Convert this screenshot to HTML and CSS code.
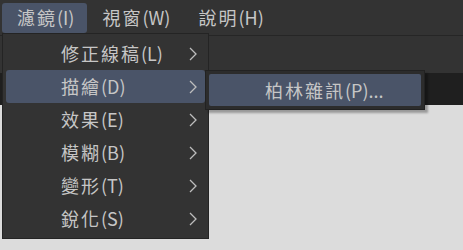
FILE: index.html
```html
<!DOCTYPE html>
<html lang="zh-Hant">
<head>
<meta charset="utf-8">
<link rel="stylesheet" href="styles.css">
</head>
<body>
<div class="app">
  <div class="menubar">
    <div class="mb-item active"><span class="cj">濾鏡</span>(I)</div>
    <div class="mb-item"><span class="cj">視窗</span>(W)</div>
    <div class="mb-item"><span class="cj">說明</span>(H)</div>
  </div>
  <div class="toolbar"></div>
  <div class="tabbar"></div>
  <div class="canvas"></div>

  <div class="dropdown">
    <div class="dd-item"><span class="label"><span class="cj">修正線稿</span>(L)</span><svg class="chev" viewBox="0 0 8 14"><path d="M1 1 L7 7 L1 13" /></svg></div>
    <div class="dd-item hl"><span class="label"><span class="cj">描繪</span>(D)</span><svg class="chev" viewBox="0 0 8 14"><path d="M1 1 L7 7 L1 13" /></svg></div>
    <div class="dd-item"><span class="label"><span class="cj">效果</span>(E)</span><svg class="chev" viewBox="0 0 8 14"><path d="M1 1 L7 7 L1 13" /></svg></div>
    <div class="dd-item"><span class="label"><span class="cj">模糊</span>(B)</span><svg class="chev" viewBox="0 0 8 14"><path d="M1 1 L7 7 L1 13" /></svg></div>
    <div class="dd-item"><span class="label"><span class="cj">變形</span>(T)</span><svg class="chev" viewBox="0 0 8 14"><path d="M1 1 L7 7 L1 13" /></svg></div>
    <div class="dd-item"><span class="label"><span class="cj">銳化</span>(S)</span><svg class="chev" viewBox="0 0 8 14"><path d="M1 1 L7 7 L1 13" /></svg></div>
  </div>

  <div class="submenu">
    <div class="sub-item"><span class="cj">柏林雜訊</span>(P)...</div>
  </div>
</div>
</body>
</html>
```
FILE: styles.css
```css
html, body {
  margin: 0;
  padding: 0;
  background: #dcdcdc;
  width: 463px;
  height: 250px;
  overflow: hidden;
  font-family: "Noto Sans CJK TC", "Noto Sans", sans-serif;
}
.app {
  position: relative;
  width: 463px;
  height: 250px;
  display: flex;
  flex-direction: column;
}
.cj {
  letter-spacing: 2px;
}
.menubar {
  background: #333333;
  border-bottom: 1px solid #262626;
  display: flex;
  align-items: flex-start;
  padding: 3px 0 0 2px;
  box-sizing: border-box;
  height: 36px;
}
.mb-item {
  height: 30px;
  line-height: 28px;
  font-size: 18px;
  color: #c6c6c6;
  padding: 0 13px 0 15px;
  border-radius: 3px;
}
.mb-item.active {
  background: #4a5468;
}
.toolbar {
  height: 37px;
  background: #333333;
}
.tabbar {
  height: 32px;
  background: #1f1f1f;
}
.canvas {
  flex: 1;
  background: #dcdcdc;
}
.dropdown {
  position: absolute;
  left: 2px;
  top: 33px;
  width: 207px;
  height: 206px;
  box-sizing: border-box;
  background: #333333;
  border: 1px solid #242424;
  padding: 3px 3px;
  display: flex;
  flex-direction: column;
}
.dd-item {
  height: 33px;
  display: flex;
  align-items: center;
  padding-left: 55px;
  padding-right: 8px;
  border-radius: 3px;
  color: #c6c6c6;
  font-size: 18px;
}
.dd-item .label {
  flex: 1;
  line-height: 33px;
}
.dd-item.hl {
  background: #4a5468;
}
.chev {
  width: 8px;
  height: 14px;
  fill: none;
  stroke: #bdbdbd;
  stroke-width: 1.3;
}
.submenu {
  position: absolute;
  left: 205px;
  top: 70px;
  width: 220px;
  height: 40px;
  box-sizing: border-box;
  background: #2c2c2c;
  border: 1px solid #222;
  padding: 3px;
  box-shadow: 3px 3px 2px rgba(0,0,0,0.3);
}
.sub-item {
  height: 100%;
  background: #4a5468;
  border-radius: 2px;
  color: #c6c6c6;
  font-size: 18px;
  display: flex;
  align-items: center;
  padding-left: 56px;
}
```
